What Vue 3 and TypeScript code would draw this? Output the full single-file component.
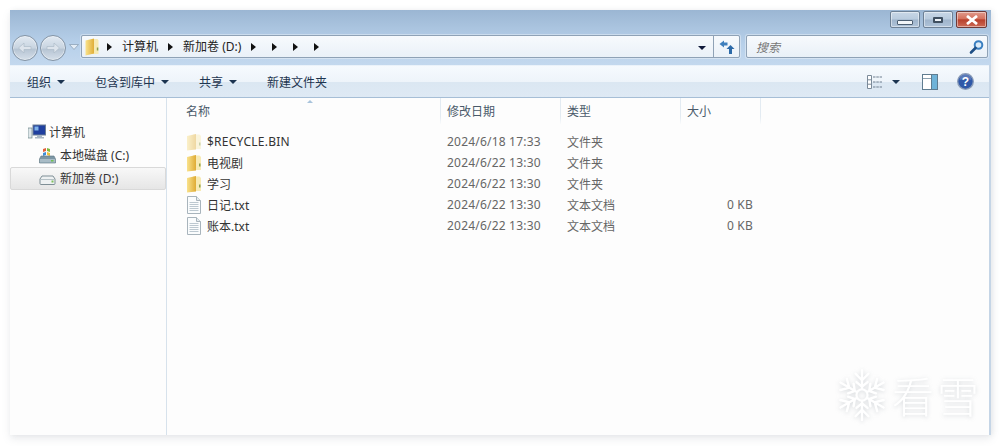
<script setup lang="ts">
interface Row { name: string; date: string; type: string; size: string; kind: 'recycle' | 'folder' | 'file' }
const rows: Row[] = [
  { name: '$RECYCLE.BIN', date: '2024/6/18 17:33', type: '文件夹', size: '', kind: 'recycle' },
  { name: '电视剧', date: '2024/6/22 13:30', type: '文件夹', size: '', kind: 'folder' },
  { name: '学习', date: '2024/6/22 13:30', type: '文件夹', size: '', kind: 'folder' },
  { name: '日记.txt', date: '2024/6/22 13:30', type: '文本文档', size: '0 KB', kind: 'file' },
  { name: '账本.txt', date: '2024/6/22 13:30', type: '文本文档', size: '0 KB', kind: 'file' },
]
const tools = [
  { label: '组织', menu: true },
  { label: '包含到库中', menu: true },
  { label: '共享', menu: true },
  { label: '新建文件夹', menu: false },
]
const crumbs = ['计算机', '新加卷 (D:)', '', '', '', '']
const flakeArms = [0, 60, 120, 180, 240, 300]
</script>

<template>
  <div class="page">
    <div class="window">
      <header class="chrome">
        <div class="caption">
          <button class="cap"><span class="min-glyph"></span></button>
          <button class="cap"><span class="max-glyph"></span></button>
          <button class="cap close">
            <svg width="16" height="10" viewBox="0 0 16 10"><path d="M3 1l10 8M13 1L3 9" stroke="#fff" stroke-width="2.8" fill="none"/></svg>
          </button>
        </div>
        <div class="nav">
          <div class="round">
            <span class="orb"><svg width="16" height="12" viewBox="0 0 16 12"><path d="M14 4.500H7V1L1.500 6 7 11V7.500h7z" fill="#dde4ec" stroke="#aebbc8" stroke-width=".7"/></svg></span>
            <span class="orb"><svg width="16" height="12" viewBox="0 0 16 12"><path d="M2 4.500h7V1l5.500 5L9 11V7.500H2z" fill="#dde4ec" stroke="#aebbc8" stroke-width=".7"/></svg></span>
          </div>
          <svg class="hist" width="10" height="6" viewBox="0 0 10 6"><path d="M.5.500h9L5 5.500z" fill="#e4edf6" stroke="#8ea2b8" stroke-width=".8"/></svg>
          <div class="address">
            <svg class="addr-folder" width="14" height="18" viewBox="0 0 14 18">
              <defs>
                <linearGradient id="addr-leaf" x1="0" y1="0" x2="1" y2="0">
                  <stop offset="0" stop-color="#f9e28c"/>
                  <stop offset="1" stop-color="#e0ae38"/>
                </linearGradient>
              </defs>
              <path d="M7 1h5.500l1 1.500V16H7z" fill="#f7eab4"/>
              <path d="M.5 2.500L9 .5V15.500L.5 17.500z" fill="url(#addr-leaf)"/>
              <path d="M11.800 9.500h1.500v3h-1.500z" fill="#8a9f4c"/>
            </svg>
            <div class="crumbs">
              <template v-for="(c, i) in crumbs" :key="i">
                <span class="tri" :class="{ bare: !c }"></span>
                <span v-if="c" class="crumb">{{ c }}</span>
              </template>
            </div>
            <span class="spacer"></span>
            <span class="drop"></span>
            <span class="refresh">
              <svg width="18" height="16" viewBox="0 0 18 16">
                <path d="M1.500 5L6 1.500v2h3.500v3H6v2z" fill="#3f7fbd"/>
                <path d="M12.500 6L8.500 10h2.500v5h3v-5h2.500z" fill="#2c6aa8"/>
              </svg>
            </span>
          </div>
          <div class="search">
            <span class="search-label">搜索</span>
            <svg width="16" height="16" viewBox="0 0 16 16">
              <circle cx="9.500" cy="6" r="3.800" fill="#dcebf8" stroke="#3a7fc0" stroke-width="2"/>
              <path d="M6.500 9L2 13.500" stroke="#1f4f85" stroke-width="2.600" stroke-linecap="round"/>
            </svg>
          </div>
        </div>
      </header>

      <div class="toolbar">
        <div v-for="t in tools" :key="t.label" class="tool">
          <span>{{ t.label }}</span>
          <span v-if="t.menu" class="caret"></span>
        </div>
        <span class="spacer"></span>
        <svg class="views" width="16" height="14" viewBox="0 0 16 14">
          <path d="M.5.500h4v13h-4zM.5 4.800h4M.5 9.200h4" fill="#fff" stroke="#7b8a99"/>
          <path d="M6 2h9M6 7h9M6 12h9" stroke="#6f7f8f" stroke-width="1.200" stroke-dasharray="2.500 .8"/>
        </svg>
        <span class="caret view-caret"></span>
        <svg class="pane" width="16" height="16" viewBox="0 0 16 16">
          <rect x=".5" y=".5" width="15" height="15" fill="#fff" stroke="#5f7c90"/>
          <path d="M1 4.500h14" stroke="#8aa0b0"/>
          <rect x="10" y="1" width="5" height="14" fill="#6fb3d8"/>
          <path d="M9.500 1v14" stroke="#5f7c90"/>
        </svg>
        <svg class="help" width="17" height="17" viewBox="0 0 17 17">
          <circle cx="8.500" cy="8.500" r="7.800" fill="#2f58a8" stroke="#8a9cb8" stroke-width="1.300"/>
          <path d="M2.500 7a6 6 0 0 1 12 0c-3-1.500-9-1.500-12 0z" fill="#fff" opacity=".2"/>
          <text x="8.500" y="12.700" text-anchor="middle" class="help-q">?</text>
        </svg>
      </div>

      <div class="body">
        <aside class="tree">
          <div class="node lvl1">
            <svg width="18" height="16" viewBox="0 0 18 16">
              <rect x="0" y="4" width="4" height="10" fill="#dfe7ea" stroke="#6b8488" stroke-width=".7"/>
              <rect x="5" y="1" width="12.500" height="10" fill="#1f3f9f" stroke="#6d7f95"/>
              <rect x="6.500" y="2.500" width="4" height="4" fill="#7fb2ea"/>
              <path d="M9 11h5v2h2v1.500H7V13h2z" fill="#a9b7c4"/>
            </svg>
            <span>计算机</span>
          </div>
          <div class="node lvl2">
            <svg width="17" height="17" viewBox="0 0 17 17">
              <path d="M4 2l3-1v3l-3 1z" fill="#e2603c"/><path d="M8 1l3 1v3L8 4z" fill="#7fbb3e"/>
              <path d="M4 6l3-1v3l-3 1z" fill="#3f8fd8"/><path d="M8 5l3 1v3L8 8z" fill="#efc23c"/>
              <path d="M2 9h13l1.500 3v4H.5v-4z" fill="#7d97a5" stroke="#5d7380" stroke-width=".6"/>
              <path d="M1 12h15v3.500H1z" fill="#a9bcc6"/>
              <rect x="12" y="13" width="2.500" height="1.500" fill="#6fc24f"/>
            </svg>
            <span>本地磁盘 (C:)</span>
          </div>
          <div class="node lvl2 selected">
            <svg width="17" height="17" viewBox="0 0 17 17">
              <path d="M3 6h11l2 3v4.500a1 1 0 0 1-1 1H2a1 1 0 0 1-1-1V9z" fill="#eef1f2" stroke="#7f8f96"/>
              <path d="M1.500 9.500h14" stroke="#b6c1c6"/>
              <rect x="12.500" y="10.500" width="2" height="2" fill="#7ec05a"/>
            </svg>
            <span>新加卷 (D:)</span>
          </div>
        </aside>

        <main class="main">
          <div class="head">
            <span class="sort"></span>
            <div class="hc c-name">名称</div>
            <div class="hc c-date">修改日期</div>
            <div class="hc c-type">类型</div>
            <div class="hc c-size">大小</div>
          </div>
          <div class="list">
            <div v-for="r in rows" :key="r.name" class="row">
              <div class="cell c-name name" :class="{ latin: r.kind === 'recycle' }">
                <svg v-if="r.kind !== 'file'" :class="{ faded: r.kind === 'recycle' }" width="16" height="18" viewBox="0 0 16 18">
                  <defs>
                    <linearGradient id="leaf" x1="0" y1="0" x2="1" y2="0">
                      <stop offset="0" stop-color="#f9e28c"/>
                      <stop offset="1" stop-color="#dfab35"/>
                    </linearGradient>
                  </defs>
                  <path d="M7 1.500h6.500l1.500 1.500V16H7z" fill="#f7eab4"/>
                  <path d="M1 3L10 1v15.500L1 17.500z" fill="url(#leaf)"/>
                  <path d="M13 9.500h1.500v3H13z" fill="#8a9f4c"/>
                </svg>
                <svg v-else width="16" height="18" viewBox="0 0 16 18">
                  <path d="M1.500.5h9L14.500 4.500V17.500H1.500z" fill="#fafcfd" stroke="#a8b4bc"/>
                  <path d="M10.500.5V4.500H14.500" fill="#e4ebef" stroke="#a8b4bc"/>
                  <path d="M3.500 6.500h9M3.500 8.500h9M3.500 10.500h9M3.500 12.500h9M3.500 14.500h9" stroke="#bcc8d0"/>
                </svg>
                <span>{{ r.name }}</span>
              </div>
              <div class="cell c-date latin-date">{{ r.date }}</div>
              <div class="cell c-type">{{ r.type }}</div>
              <div class="cell c-size size">{{ r.size }}</div>
            </div>
          </div>
          <div class="mark">
            <svg width="48" height="56" viewBox="-26 -29 52 58">
              <g v-for="a in flakeArms" :key="a" :transform="`rotate(${a})`" fill="none" stroke="#fff" stroke-width="2.600" stroke-linecap="round">
                <path d="M0 -7V-27M-7 -23L0 -16L7 -23M-6 -14L0 -9L6 -14"/>
              </g>
              <circle r="6" fill="none" stroke="#fff" stroke-width="2.400"/>
            </svg>
            <span class="mark-text">看雪</span>
          </div>
        </main>
      </div>
    </div>
  </div>
</template>

<style>
html, body { margin: 0; background: #fff; }
</style>

<style scoped>
.page {
  width: 1002px;
  height: 446px;
  box-sizing: border-box;
  padding: 10px 11px 11px 10px;
  overflow: hidden;
  background: #fff;
  font-family: "Noto Sans", "Noto Sans CJK SC", sans-serif;
  font-size: 12px;
  color: #333;
}
.window {
  height: 100%;
  display: flex;
  flex-direction: column;
  background: #c5d5e6;
  box-shadow: 0 4px 8px rgba(120, 130, 140, .14), 2px 0 5px rgba(120, 130, 140, .1);
  padding-right: 2px;
}
.chrome {
  height: 55px;
  flex: none;
  box-sizing: border-box;
  margin-right: -2px;
  background: linear-gradient(#9bb6d3 0, #a9c3de 30%, #b7d0ea 62%, #c3d8ee 100%);
  display: flex;
  flex-direction: column;
}
.caption {
  height: 25px;
  flex: none;
  display: flex;
  justify-content: flex-end;
  gap: 3px;
  padding: 1px 4px 0 0;
  box-sizing: border-box;
}
.cap {
  width: 30px;
  height: 17px;
  padding: 0;
  border: 1px solid #6d8095;
  border-radius: 2px;
  background: linear-gradient(#c8d7e6 0, #b9cbde 48%, #9fb4cb 52%, #afc3d9 100%);
  box-shadow: inset 0 0 0 1px rgba(255, 255, 255, .45);
  display: flex;
  align-items: center;
  justify-content: center;
}
.close {
  width: 31px;
  border-color: #6e3a38;
  background: linear-gradient(#e09a8c 0, #d4705c 46%, #b8402c 52%, #cc6a56 100%);
}
.min-glyph {
  width: 14px;
  height: 3px;
  margin-top: 5px;
  background: #f2f5f8;
  border: 1px solid #4d5f72;
  border-radius: 1px;
}
.max-glyph {
  width: 6px;
  height: 2px;
  background: #eef3f8;
  border: 2px solid #3f4f60;
  border-radius: 1px;
}
.nav {
  height: 23px;
  flex: none;
  display: flex;
  align-items: center;
  padding-right: 3px;
}
.round {
  display: flex;
  gap: 2px;
  margin: 2px 0 0 2px;
}
.orb {
  width: 26px;
  height: 26px;
  box-sizing: border-box;
  border: 1px solid #8494a5;
  border-radius: 50%;
  background: linear-gradient(#e2eaf2, #c8d4e0 50%, #b6c4d3 55%, #d6e0ea);
  box-shadow: inset 0 0 0 1px rgba(255, 255, 255, .4);
  display: flex;
  align-items: center;
  justify-content: center;
}
.hist { margin: 1px 0 0 3px; flex: none; }
.address {
  flex: 1;
  height: 23px;
  margin-left: 2px;
  box-sizing: border-box;
  border: 1px solid #8fa2b6;
  border-radius: 2px;
  background: linear-gradient(#f7fafd, #eaf1f8);
  display: flex;
  align-items: center;
  padding-left: 3px;
  box-shadow: 0 0 0 1px rgba(255, 255, 255, .35);
}
.addr-folder { flex: none; margin-right: 8px; }
.crumbs { display: flex; align-items: center; color: #222; margin-bottom: 2px; }
.tri {
  width: 0;
  height: 0;
  margin: 2px 10px 0 0;
  border-left: 5px solid #111;
  border-top: 4px solid transparent;
  border-bottom: 4px solid transparent;
}
.tri.bare { margin-right: 16px; }
.crumb { margin-right: 10px; white-space: nowrap; }
.spacer { flex: 1; }
.drop {
  width: 0;
  height: 0;
  margin-right: 7px;
  margin-top: 2px;
  border-top: 4px solid #101a3a;
  border-left: 4px solid transparent;
  border-right: 4px solid transparent;
}
.refresh {
  width: 25px;
  height: 100%;
  border-left: 1px solid #8fa2b6;
  display: flex;
  align-items: center;
  justify-content: center;
}
.search {
  width: 242px;
  height: 23px;
  margin-left: 6px;
  box-sizing: border-box;
  border: 1px solid #8fa2b6;
  border-radius: 2px;
  background: linear-gradient(#f7fafd, #e9f0f7);
  display: flex;
  align-items: center;
  justify-content: space-between;
  padding: 0 2px 0 9px;
  color: #777;
  font-style: italic;
  box-shadow: 0 0 0 1px rgba(255, 255, 255, .35);
}
.toolbar {
  height: 33px;
  box-sizing: border-box;
  flex: none;
  background: linear-gradient(#f6fafe 0, #eef4fa 50%, #dbe7f2 52%, #dee9f4 100%);
  border-top: 1px solid #eaf2fa;
  border-bottom: 1px solid #a6bed6;
  display: flex;
  align-items: center;
  padding: 0 15px 0 17px;
  color: #1e3550;
}
.tool {
  display: flex;
  align-items: center;
  gap: 6px;
  margin-right: 30px;
  white-space: nowrap;
}
.caret {
  width: 0;
  height: 0;
  margin-top: 1px;
  border-top: 4px solid #1c3450;
  border-left: 4px solid transparent;
  border-right: 4px solid transparent;
}
.views { margin-right: 9px; }
.view-caret { margin-right: 22px; }
.pane { margin-right: 19px; }
.help-q {
  fill: #fff;
  font-family: "Liberation Sans", sans-serif;
  font-weight: 700;
  font-size: 12px;
}
.body {
  flex: 1;
  min-height: 0;
  display: flex;
  background: #fdfdfd;
}
.tree {
  flex: none;
  box-sizing: border-box;
  width: 157px;
  border-right: 1px solid #d7e2ec;
  padding-top: 23px;
  background: #fdfdfd;
}
.node {
  height: 23px;
  box-sizing: border-box;
  padding-bottom: 1px;
  display: flex;
  align-items: center;
  gap: 4px;
  white-space: nowrap;
}
.lvl1 { padding-left: 18px; gap: 3px; }
.lvl2 { padding-left: 29px; }
.selected {
  width: 156px;
  border: 1px solid #d9d9d9;
  border-radius: 2px;
  padding-left: 28px;
  background: linear-gradient(#f8f8f8, #e6e6e6);
}
.main {
  flex: 1;
  position: relative;
  min-width: 0;
}
.head {
  height: 26px;
  display: flex;
  position: relative;
  color: #4a5a6a;
}
.sort {
  position: absolute;
  left: 140px;
  top: 2px;
  width: 0;
  height: 0;
  border-bottom: 3px solid #a9c4dc;
  border-left: 3px solid transparent;
  border-right: 3px solid transparent;
}
.hc {
  box-sizing: border-box;
  padding-left: 6px;
  line-height: 28px;
  position: relative;
  border-right: 1px solid;
  border-image: linear-gradient(#e3ebf2, #e3ebf2 70%, transparent) 1;
}
.c-name { width: 274px; }
.c-date { width: 120px; }
.c-type { width: 120px; }
.c-size { width: 80px; }
.hc.c-name { padding-left: 19px; }
.list { padding-top: 7px; }
.row {
  height: 21px;
  display: flex;
  align-items: center;
  color: #666;
  white-space: nowrap;
}
.cell { box-sizing: border-box; padding-left: 6px; }
.cell.name {
  display: flex;
  align-items: center;
  gap: 5px;
  padding-left: 19px;
  color: #333;
}
.name svg { flex: none; }
.latin span { letter-spacing: .25px; }
.latin-date { letter-spacing: .2px; }
.faded { opacity: .45; }
.cell.size { text-align: right; padding-right: 8px; letter-spacing: .2px; }
.mark {
  position: absolute;
  right: 7px;
  bottom: 12px;
  display: flex;
  align-items: center;
  gap: 6px;
  filter: drop-shadow(0 1px 2px rgba(120, 130, 140, .28));
}
.mark-text {
  font-family: "Noto Sans CJK SC", sans-serif;
  font-weight: 300;
  font-size: 42px;
  letter-spacing: 3px;
  line-height: 48px;
  color: #fff;
}
</style>
